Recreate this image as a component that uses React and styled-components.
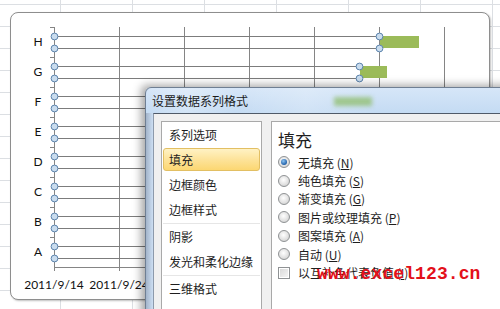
import React from 'react';
import styled, { createGlobalStyle } from 'styled-components';

const GlobalStyle = createGlobalStyle`
  html, body {
    margin: 0;
    padding: 0;
    width: 500px;
    height: 309px;
    overflow: hidden;
  }
  body {
    font-family: "Noto Sans CJK SC", "Liberation Sans", sans-serif;
  }
`;

const Sheet = styled.div`
  position: relative;
  width: 500px;
  height: 309px;
  box-sizing: border-box;
  padding: 12px 10px 9px 10px;
  overflow: hidden;
  background-color: #fff;
  background-image:
    linear-gradient(to right, #dcdfe3 1px, transparent 1px),
    linear-gradient(to bottom, #dcdfe3 1px, transparent 1px);
  background-size: 72px 100%, 100% 22px;
  background-position: 60px 0, 0 4px;
`;

const ChartCard = styled.div`
  width: 480px;
  height: 288px;
  box-sizing: border-box;
  background: #fff;
  border: 1px solid #8e8e8e;
  border-radius: 8px;
  box-shadow: 1px 1px 2px rgba(0, 0, 0, 0.25);
  overflow: hidden;
`;

const Dialog = styled.div`
  position: absolute;
  left: 145px;
  top: 87px;
  width: 380px;
  height: 250px;
  border: 1px solid #6f7f93;
  border-radius: 6px 0 0 0;
  background: linear-gradient(to right, #a3b4ca 0px, #cddff3 7px, #cddff3 100%);
  box-shadow: -4px -2px 8px rgba(0, 0, 0, 0.35);
  display: flex;
  flex-direction: column;
`;

const TitleBar = styled.div`
  position: relative;
  height: 25px;
  display: flex;
  align-items: center;
  padding-left: 6px;
  font-size: 12px;
  color: #1b1b1b;
  background:
    linear-gradient(to right, transparent 0, rgba(255, 255, 255, 0.25) 40px, transparent 90px, rgba(255, 255, 255, 0.2) 160px, transparent 230px),
    linear-gradient(to bottom, #d6e6f8, #c4dbf3);
  border-radius: 6px 0 0 0;
  overflow: hidden;
`;

const GlassBlur = styled.div`
  position: absolute;
  left: 188px;
  top: 9px;
  width: 38px;
  height: 9px;
  background: #8fbd6c;
  opacity: 0.75;
  filter: blur(2px);
`;

const Body = styled.div`
  flex: 1;
  margin-left: 7px;
  border-top: 1px solid #4f5a68;
  border-left: 1px solid #8d9aab;
  background: #f0f0f0;
  padding: 7px 0 0 7px;
  display: flex;
  gap: 9px;
`;

const ListPanel = styled.div`
  width: 97px;
  background: #fff;
  border: 1px solid #a9a9a9;
  padding: 1px 1px;
  font-size: 12px;
  color: #1e1e1e;
`;

const ListItem = styled.div`
  height: 23px;
  margin-bottom: 2px;
  display: flex;
  align-items: center;
  padding-left: 5px;
  box-sizing: border-box;
  border: 1px solid ${p => (p.$active ? '#e2bf63' : 'transparent')};
  border-radius: 3px;
  background: ${p => (p.$active ? 'linear-gradient(to bottom, #fff2c4, #fde39a 50%, #fcd772)' : 'transparent')};
`;

const Separator = styled.div`
  height: 1px;
  background: #e6e6e6;
  margin: 0 0 1px;
`;

const OptionsPanel = styled.div`
  flex: 1;
  background: #fff;
  border: 1px solid #a9a9a9;
  padding: 8px 0 0 6px;
  color: #1e1e1e;
`;

const Heading = styled.div`
  font-size: 17px;
  line-height: 20px;
  height: 20px;
  margin-bottom: 3px;
`;

const OptionRow = styled.div`
  height: 18.4px;
  display: flex;
  align-items: center;
  gap: 8px;
  font-size: 12px;
  white-space: nowrap;
`;

const Radio = styled.span`
  width: 12px;
  height: 12px;
  box-sizing: border-box;
  border-radius: 50%;
  border: 1px solid #8f9294;
  background: radial-gradient(circle at 45% 40%, #ffffff 0%, #e2e2e2 55%, #c6c6c6 100%);
  display: flex;
  align-items: center;
  justify-content: center;
  &::after {
    content: '';
    display: ${p => (p.$checked ? 'block' : 'none')};
    width: 6px;
    height: 6px;
    border-radius: 50%;
    background: radial-gradient(circle at 40% 35%, #8cc4f2, #1f5fa8 70%);
  }
`;

const Checkbox = styled.span`
  width: 12px;
  height: 12px;
  box-sizing: border-box;
  border: 1px solid #8f9294;
  background: linear-gradient(135deg, #d6d6d6, #f7f7f7);
  box-shadow: inset 0 0 0 1px #fff;
`;

const Watermark = styled.div`
  position: absolute;
  left: 317px;
  top: 262px;
  font-family: "Liberation Mono", "Courier New", monospace;
  font-weight: bold;
  font-size: 18px;
  line-height: 24px;
  color: #e3101a;
  letter-spacing: 0.1px;
`;

const categories = ['H', 'G', 'F', 'E', 'D', 'C', 'B', 'A'];
const bars = { H: { start: 368, end: 407 }, G: { start: 348, end: 375 } };
const AXIS_X = 43;
const TOP = 14;
const BAND = 30;
const BOTTOM = TOP + BAND * categories.length;

const GanttChart = () => (
  <svg width="478" height="286" viewBox="0 0 478 286">
    {[0, 1, 2, 3, 4, 5, 6].map(i => (
      <line key={'v' + i} x1={AXIS_X + 65 * i + 0.5} y1={TOP} x2={AXIS_X + 65 * i + 0.5} y2={BOTTOM + 4} stroke="#858585" />
    ))}
    <line x1={AXIS_X} y1={BOTTOM + 0.5} x2={470} y2={BOTTOM + 0.5} stroke="#858585" />
    {categories.map((c, i) => (
      <line key={'t' + i} x1={AXIS_X - 4} y1={TOP + BAND * i + 0.5} x2={AXIS_X} y2={TOP + BAND * i + 0.5} stroke="#858585" />
    ))}
    {categories.map((c, i) => {
      const top = TOP + BAND * i;
      const bar = bars[c];
      const end = bar ? bar.start : 330;
      return (
        <g key={c}>
          {bar && <rect x={bar.start + 1} y={top + 9} width={bar.end - bar.start} height={12} fill="#9bbb59" />}
          <line x1={AXIS_X} y1={top + 9.5} x2={end} y2={top + 9.5} stroke="#7c7c7c" />
          <line x1={AXIS_X} y1={top + 21.5} x2={end} y2={top + 21.5} stroke="#7c7c7c" />
          <text x="27" y={top + 19} fontFamily="Lato, 'Open Sans', sans-serif" fontSize="12" textAnchor="middle" fill="#111">{c}</text>
        </g>
      );
    })}
    {categories.map((c, i) => {
      const top = TOP + BAND * i;
      const bar = bars[c];
      const xs = bar ? [AXIS_X + 0.5, bar.start + 0.5] : [AXIS_X + 0.5];
      return xs.flatMap(x => [top + 9.5, top + 21.5].map(y => (
        <circle key={c + x + y} cx={x} cy={y} r="3.4" fill="#c9dcee" stroke="#5d84ad" strokeWidth="1" />
      )));
    })}
    <text x={AXIS_X} y="276" fontFamily="Lato, 'Open Sans', sans-serif" fontSize="12" textAnchor="middle" fill="#111">2011/9/14</text>
    <text x={AXIS_X + 65} y="276" fontFamily="Lato, 'Open Sans', sans-serif" fontSize="12" textAnchor="middle" fill="#111">2011/9/24</text>
  </svg>
);

const listGroups = [
  ['系列选项', '填充', '边框颜色', '边框样式'],
  ['阴影', '发光和柔化边缘'],
  ['三维格式'],
];

const options = [
  ['无填充', 'N', true],
  ['纯色填充', 'S'],
  ['渐变填充', 'G'],
  ['图片或纹理填充', 'P'],
  ['图案填充', 'A'],
  ['自动', 'U'],
];

const App = () => (
  <>
    <GlobalStyle />
    <Sheet>
      <ChartCard>
        <GanttChart />
      </ChartCard>
      <Dialog>
        <TitleBar>
          <GlassBlur />
          <span style={{ position: 'relative' }}>设置数据系列格式</span>
        </TitleBar>
        <Body>
          <ListPanel>
            {listGroups.map((group, gi) => (
              <React.Fragment key={gi}>
                {gi > 0 && <Separator />}
                {group.map(label => (
                  <ListItem key={label} $active={label === '填充'}>{label}</ListItem>
                ))}
              </React.Fragment>
            ))}
          </ListPanel>
          <OptionsPanel>
            <Heading>填充</Heading>
            {options.map(([label, key, checked]) => (
              <OptionRow key={key}>
                <Radio $checked={checked} />
                <span>{label} (<u>{key}</u>)</span>
              </OptionRow>
            ))}
            <OptionRow>
              <Checkbox />
              <span>以互补色代表负值 (<u>I</u>)</span>
            </OptionRow>
          </OptionsPanel>
        </Body>
      </Dialog>
      <Watermark>www.excel123.cn</Watermark>
    </Sheet>
  </>
);

export default App;
